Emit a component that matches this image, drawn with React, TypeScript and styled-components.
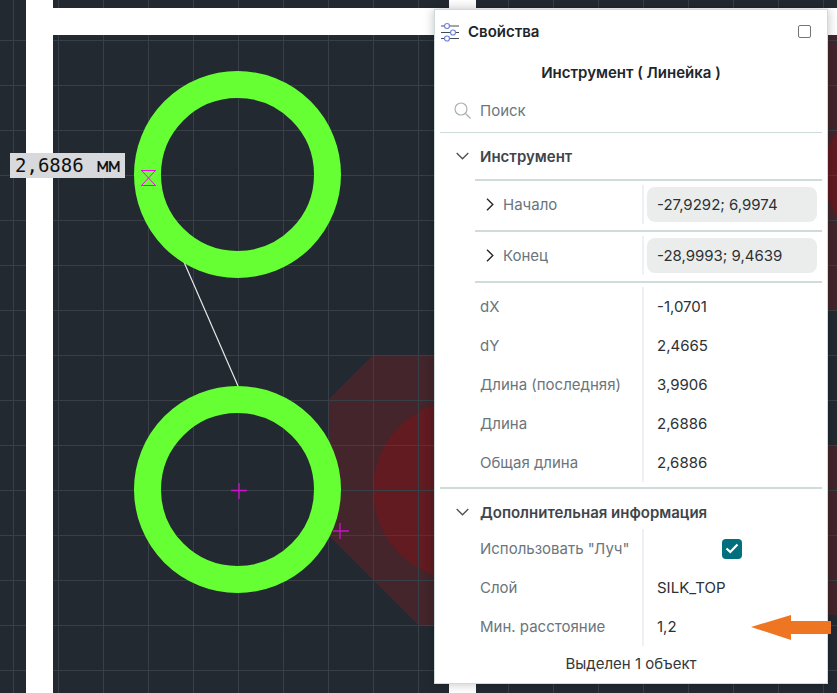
import React from "react";
import styled, { createGlobalStyle } from "styled-components";

const Global = createGlobalStyle`
  html, body { margin: 0; padding: 0; background: #222931; }
  #root { width: 837px; height: 693px; }
`;

const Stage = styled.div`
  position: relative;
  width: 837px;
  height: 693px;
  overflow: hidden;
  background: #222931;
  font-family: Inter, "Noto Sans", sans-serif;
`;

const Canvas = styled.svg`
  position: absolute;
  inset: 0;
  display: block;
`;

const Measure = styled.div`
  position: absolute;
  left: 10px;
  top: 153px;
  width: 115px;
  height: 25px;
  box-sizing: border-box;
  padding-left: 5px;
  background: #d7d9dc;
  color: #111;
  font: 19px/25px "DejaVu Sans Mono", monospace;
  word-spacing: 2px;
  white-space: pre;
`;

const Panel = styled.aside`
  position: absolute;
  left: 434px;
  top: 9px;
  width: 394px;
  height: 675px;
  box-sizing: border-box;
  border: 1px solid #cfdadb;
  background: #fff;
  padding: 0 5px;
  display: flex;
  flex-direction: column;
  box-shadow: 0 0 10px rgba(0, 0, 0, 0.25);
  color: #262b30;
  font-size: 15px;
`;

const Header = styled.header`
  display: flex;
  align-items: center;
  height: 43px;
  padding-left: 1px;
`;

const HeaderTitle = styled.span`
  margin-left: 9px;
  font-weight: 600;
  color: #20252a;
  flex: 1;
`;

const WindowButton = styled.span`
  width: 11px;
  height: 11px;
  border: 1px solid #70777b;
  border-radius: 2px;
  margin-right: 11px;
`;

const Title = styled.h2`
  margin: 0;
  height: 40px;
  line-height: 40px;
  text-align: center;
  font-size: 15px;
  font-weight: 600;
  color: #20252a;
`;

const Search = styled.div`
  display: flex;
  align-items: center;
  height: 39px;
  box-sizing: border-box;
  padding: 0 0 4px 14px;
  gap: 9px;
  color: #6a7780;
`;

const SearchRule = styled.div`
  height: 1px;
  background: #cfdcdc;
`;

const SectionHead = styled.div`
  display: flex;
  align-items: center;
  gap: 11px;
  height: 46px;
  padding-left: 16px;
  font-weight: 600;
  color: #3e454a;
`;

const Block = styled.div`
  margin-left: 35px;
`;

const Rule = styled.div`
  height: 2px;
  background: #cfdcdc;
`;

const WideRule = styled.div`
  height: 2px;
  background: #cfdcdc;
  margin-top: 5px;
`;

const NestedRow = styled.div`
  display: grid;
  grid-template-columns: 167px 2px 1fr;
  height: 49px;
  align-items: center;
`;

const NestedLabel = styled.div`
  display: flex;
  align-items: center;
  gap: 9px;
  padding-left: 11px;
  margin-top: -2px;
  color: #6a757c;
`;

const Sep = styled.div`
  background: #eef0f8;
  height: 39px;
  margin-top: -2px;
`;

const ValueBox = styled.div`
  margin: -2px 5px 0 3px;
  height: 35px;
  line-height: 35px;
  background: #ebeded;
  border-radius: 8px;
  padding-left: 10px;
  color: #2c3135;
`;

const FlatList = styled.div<{ $top: number }>`
  margin-top: ${(p) => p.$top}px;
  display: grid;
  grid-template-columns: 169px 1fr;
  grid-auto-rows: 39px;
`;

const FlatLabel = styled.div`
  display: flex;
  align-items: center;
  padding-left: 5px;
  border-right: 2px solid #eef0f8;
  color: #6a757c;
  white-space: nowrap;
`;

const FlatValue = styled.div`
  display: flex;
  align-items: center;
  padding-left: 13px;
  color: #2c3135;
`;

const CheckCell = styled.div`
  display: flex;
  align-items: center;
  justify-content: center;
  padding-right: 2px;
`;

const Check = styled.span`
  width: 20px;
  height: 20px;
  border-radius: 4px;
  background: #00707f;
  display: flex;
  align-items: center;
  justify-content: center;
`;

const Footer = styled.footer`
  height: 36px;
  line-height: 36px;
  text-align: center;
  color: #33383c;
`;

const Arrow = styled.svg`
  position: absolute;
  left: 751px;
  top: 615px;
  display: block;
`;

const Sliders = () => (
  <svg width="18" height="20" viewBox="0 0 18 20" fill="none">
    <path d="M0 4h18M0 10.500h18M0 16.500h18" stroke="#454b52" strokeWidth="1" />
    <circle cx="6" cy="4" r="2.500" fill="#fff" stroke="#6d85e0" strokeWidth="1.200" />
    <circle cx="12" cy="10.500" r="2.500" fill="#fff" stroke="#6d85e0" strokeWidth="1.200" />
    <circle cx="6" cy="16.500" r="2.500" fill="#fff" stroke="#6d85e0" strokeWidth="1.200" />
  </svg>
);

const SearchIcon = () => (
  <svg width="17" height="17" viewBox="0 0 17 17" fill="none" stroke="#a9b1b3" strokeWidth="1.200">
    <circle cx="7" cy="7" r="6" />
    <path d="M11.500 11.500L16.500 16.500" />
  </svg>
);

const ChevronDown = () => (
  <svg width="13" height="8" viewBox="0 0 13 8" fill="none" stroke="#4a5055" strokeWidth="1.300">
    <path d="M0.700 1L6.500 6.800L12.300 1" />
  </svg>
);

const ChevronRight = () => (
  <svg width="8" height="13" viewBox="0 0 8 13" fill="none" stroke="#26292c" strokeWidth="1.400">
    <path d="M1 0.700L6.800 6.500L1 12.300" />
  </svg>
);

const gridX = Array.from({ length: 19 }, (_, i) => 13 + i * 45);
const gridY = Array.from({ length: 15 }, (_, i) => 40 + i * 45);

const Ring = ({ cy }: { cy: number }) => (
  <circle cx="237.500" cy={cy} r="90" fill="none" stroke="#66ff33" strokeWidth="27" />
);

const measures: [string, string][] = [
  ["dX", "-1,0701"],
  ["dY", "2,4665"],
  ["Длина (последняя)", "3,9906"],
  ["Длина", "2,6886"],
  ["Общая длина", "2,6886"],
];

export default function App() {
  return (
    <Stage>
      <Global />
      <Canvas width="837" height="693" viewBox="0 0 837 693">
        <polygon points="373,355 837,355 837,625 418,625 328,535 328,400" fill="#43252b" />
        <polygon points="828,35 837,35 837,310 828,310" fill="#43252b" />
        <rect x="828" y="310" width="9" height="135" fill="#222931" />
        <rect x="828" y="445" width="9" height="170" fill="#43252b" />
        <rect x="828" y="615" width="9" height="78" fill="#222931" />
        <circle cx="463" cy="490" r="90" fill="#611b21" />
        <circle cx="900" cy="174" r="76" fill="#611b21" />
        <g stroke="#383f47" strokeWidth="1">
          {gridX.map((x) => (
            <line key={x} x1={x + 0.5} y1="0" x2={x + 0.5} y2="693" />
          ))}
          {gridY.map((y) => (
            <line key={y} x1="0" y1={y + 0.5} x2="837" y2={y + 0.5} />
          ))}
        </g>
        <rect x="26" y="0" width="27" height="693" fill="#fff" />
        <rect x="53" y="8" width="784" height="27" fill="#fff" />
        <rect x="449" y="0" width="27" height="693" fill="#fff" />
        <line x1="184" y1="262" x2="238" y2="386" stroke="#e8e8e8" strokeWidth="1.200" />
        <Ring cy={174.5} />
        <Ring cy={489.5} />
        <g stroke="#cc11cc" strokeWidth="1.300" fill="none">
          <path d="M231 490.500h16M239 483v16" />
          <path d="M333 531h16M340 523v16" />
        </g>
        <path
          d="M141 170.500h15M141 185.500h15M141.500 170.500L155.500 185.500M155.500 170.500L141.500 185.500"
          stroke="#ff00ff"
          strokeWidth="1"
          fill="none"
        />
      </Canvas>

      <Measure>2,6886 мм</Measure>

      <Panel>
        <Header>
          <Sliders />
          <HeaderTitle>Свойства</HeaderTitle>
          <WindowButton />
        </Header>
        <Title>Инструмент ( Линейка )</Title>
        <Search>
          <SearchIcon />
          <span>Поиск</span>
        </Search>
        <SearchRule />
        <SectionHead>
          <ChevronDown />
          <span>Инструмент</span>
        </SectionHead>
        <Block>
          <Rule />
          <NestedRow>
            <NestedLabel>
              <ChevronRight />
              <span>Начало</span>
            </NestedLabel>
            <Sep />
            <ValueBox>-27,9292; 6,9974</ValueBox>
          </NestedRow>
          <Rule />
          <NestedRow>
            <NestedLabel>
              <ChevronRight />
              <span>Конец</span>
            </NestedLabel>
            <Sep />
            <ValueBox>-28,9993; 9,4639</ValueBox>
          </NestedRow>
          <Rule />
          <FlatList $top={4}>
            {measures.map(([k, v]) => (
              <React.Fragment key={k}>
                <FlatLabel>{k}</FlatLabel>
                <FlatValue>{v}</FlatValue>
              </React.Fragment>
            ))}
          </FlatList>
        </Block>
        <WideRule />
        <SectionHead>
          <ChevronDown />
          <span>Дополнительная информация</span>
        </SectionHead>
        <Block>
          <FlatList $top={-6}>
            <FlatLabel>Использовать "Луч"</FlatLabel>
            <CheckCell>
              <Check>
                <svg width="14" height="11" viewBox="0 0 14 11" fill="none" stroke="#fff" strokeWidth="2.200">
                  <path d="M1.500 5.500L5.300 9L12.500 1.500" />
                </svg>
              </Check>
            </CheckCell>
            <FlatLabel>Слой</FlatLabel>
            <FlatValue>SILK_TOP</FlatValue>
            <FlatLabel>Мин. расстояние</FlatLabel>
            <FlatValue>1,2</FlatValue>
          </FlatList>
        </Block>
        <Footer>Выделен 1 объект</Footer>
      </Panel>

      <Arrow width="80" height="25" viewBox="0 0 80 25">
        <polygon points="0,12 40,0 40,6 80,6 80,19 40,19 40,25" fill="#ee7623" />
      </Arrow>
    </Stage>
  );
}
